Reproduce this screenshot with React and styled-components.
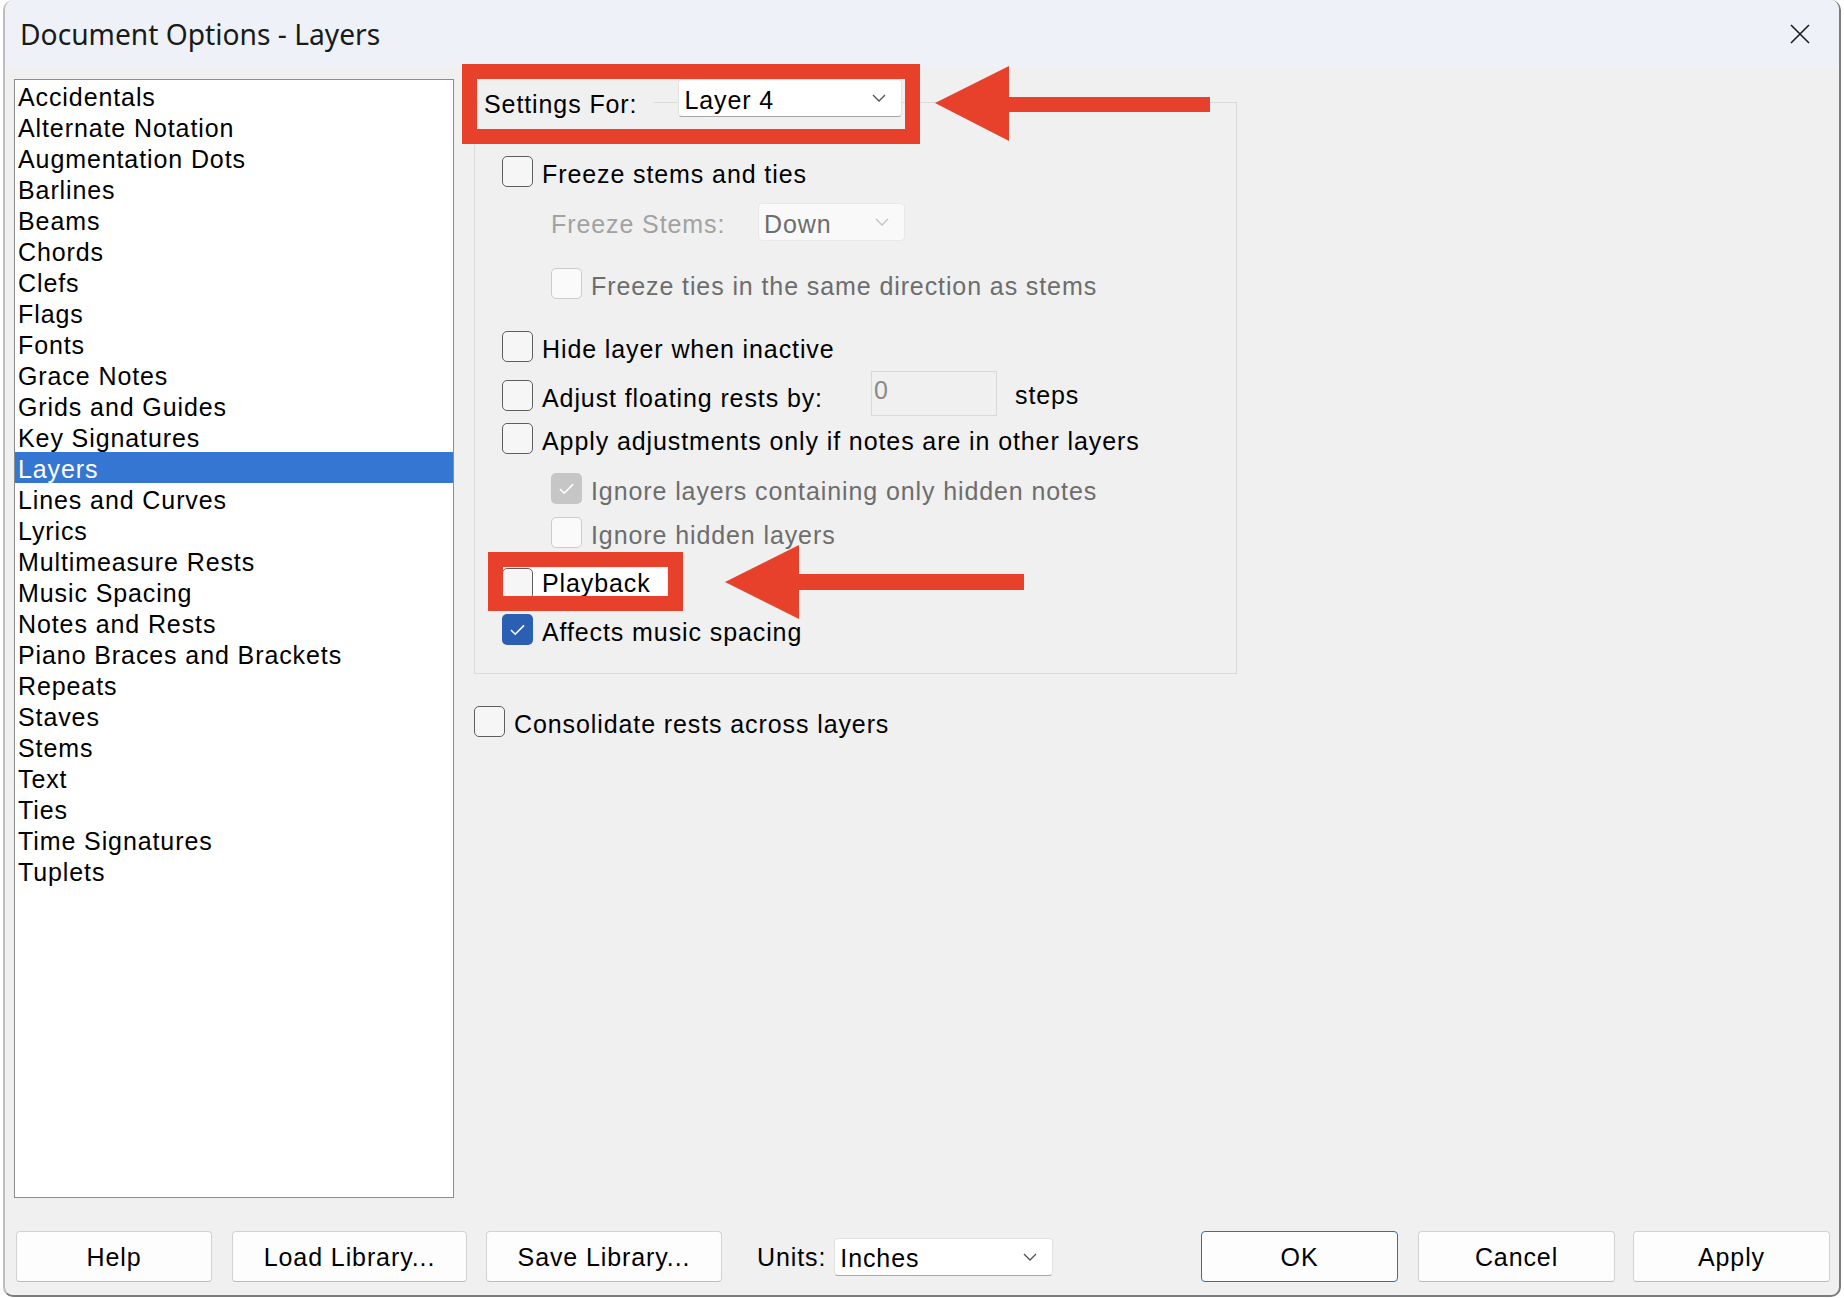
import styled, { createGlobalStyle } from 'styled-components'

const GlobalStyle = createGlobalStyle`
  html, body {
    margin: 0;
    padding: 0;
    background: #ffffff;
  }
  body {
    width: 1844px;
    height: 1298px;
    overflow: hidden;
  }
`

const UI_FONT = `'Liberation Sans', Arial, sans-serif`
const RED = '#e8412b'

const categories = [
  'Accidentals',
  'Alternate Notation',
  'Augmentation Dots',
  'Barlines',
  'Beams',
  'Chords',
  'Clefs',
  'Flags',
  'Fonts',
  'Grace Notes',
  'Grids and Guides',
  'Key Signatures',
  'Layers',
  'Lines and Curves',
  'Lyrics',
  'Multimeasure Rests',
  'Music Spacing',
  'Notes and Rests',
  'Piano Braces and Brackets',
  'Repeats',
  'Staves',
  'Stems',
  'Text',
  'Ties',
  'Time Signatures',
  'Tuplets',
]

const Chevron = ({ color = '#505050' }) => (
  <svg width="14" height="8" viewBox="0 0 14 8">
    <polyline points="1,1 7,7 13,1" fill="none" stroke={color} strokeWidth="1.3" />
  </svg>
)

const CheckMark = () => (
  <svg width="31" height="31" viewBox="0 0 31 31">
    <path d="M9 16 L13.2 20.2 L22 11.4" fill="none" stroke="#ffffff" strokeWidth="1.6" />
  </svg>
)

function CheckRow({ label, checked, disabled, indent, mt, highlight }) {
  return (
    <Row $mt={mt} $indent={indent} $highlight={highlight}>
      <Box $checked={checked} $disabled={disabled}>
        {checked && <CheckMark />}
      </Box>
      <RowText $disabled={disabled} $flat={highlight}>
        {label}
      </RowText>
    </Row>
  )
}

export default function App() {
  return (
    <Page>
      <GlobalStyle />
      <Window>
        <TitleBar>
          <Title>Document Options - Layers</Title>
          <svg width="20" height="20" viewBox="0 0 20 20">
            <path d="M1 1 L19 19 M19 1 L1 19" stroke="#1b1b1b" strokeWidth="1.6" />
          </svg>
        </TitleBar>

        <Body>
          <List>
            {categories.map((name) => (
              <Item key={name} $selected={name === 'Layers'}>
                {name}
              </Item>
            ))}
          </List>

          <Panel>
            <GroupBox>
              <Legend>
                <LegendLabel>Settings For:</LegendLabel>
                <Select $w={224} $ml={24}>
                  <span>Layer 4</span>
                  <Chevron />
                </Select>
              </Legend>

              <CheckRow mt={39} label="Freeze stems and ties" />

              <FieldRow $mt={16} $indent={49}>
                <FieldLabel $w={207} $faint>
                  Freeze Stems:
                </FieldLabel>
                <Select $w={147} $disabled>
                  <span>Down</span>
                  <Chevron color="#c2c2c2" />
                </Select>
              </FieldRow>

              <CheckRow
                mt={27}
                indent={49}
                disabled
                label="Freeze ties in the same direction as stems"
              />
              <CheckRow mt={32} label="Hide layer when inactive" />

              <Row $mt={18}>
                <Box />
                <FieldLabel $w={329}>Adjust floating rests by:</FieldLabel>
                <NumberBox>0</NumberBox>
                <Steps>steps</Steps>
              </Row>

              <CheckRow mt={12} label="Apply adjustments only if notes are in other layers" />
              <CheckRow
                mt={19}
                indent={49}
                disabled
                checked
                label="Ignore layers containing only hidden notes"
              />
              <CheckRow mt={13} indent={49} disabled label="Ignore hidden layers" />
              <CheckRow mt={20} highlight label="Playback" />
              <CheckRow mt={15} checked label="Affects music spacing" />
            </GroupBox>

            <CheckRow mt={32} label="Consolidate rests across layers" />
          </Panel>
        </Body>

        <Footer>
          <Button $w={196}>Help</Button>
          <Button $w={235} $ml={20}>
            Load Library...
          </Button>
          <Button $w={236} $ml={19}>
            Save Library...
          </Button>
          <UnitsLabel>Units:</UnitsLabel>
          <Select $w={219} $ml={8}>
            <span>Inches</span>
            <Chevron />
          </Select>
          <Button $w={197} $ml="auto" $primary>
            OK
          </Button>
          <Button $w={197} $ml={20}>
            Cancel
          </Button>
          <Button $w={197} $ml={18}>
            Apply
          </Button>
        </Footer>
      </Window>

      <Annotations viewBox="0 0 1844 1298">
        <rect x="469.5" y="71.5" width="443" height="65" fill="none" stroke={RED} strokeWidth="15" />
        <polygon
          points="935,103 1009,66 1009,97 1210,97 1210,112 1009,112 1009,141"
          fill={RED}
        />
        <rect x="495.5" y="559.5" width="180" height="44" fill="none" stroke={RED} strokeWidth="15" />
        <polygon
          points="725,582 799,545 799,574 1024,574 1024,590 799,590 799,619"
          fill={RED}
        />
      </Annotations>
    </Page>
  )
}

const Page = styled.div`
  position: relative;
  width: 1844px;
  height: 1298px;
  padding-left: 3px;
  box-sizing: border-box;
`

const Window = styled.div`
  width: 1838px;
  height: 1297px;
  box-sizing: border-box;
  border: 2px solid #a8a8a8;
  border-top: none;
  border-color: #c6c6c6 #7c7c7c #7c7c7c #bdbdbd;
  border-radius: 10px;
  background: #f0f0f0;
  overflow: hidden;
  display: flex;
  flex-direction: column;
  font-family: ${UI_FONT};
  font-size: 25px;
  letter-spacing: 0.9px;
  color: #000000;
`

const TitleBar = styled.div`
  height: 68px;
  flex: none;
  display: flex;
  align-items: center;
  justify-content: space-between;
  padding: 0 29px 0 15px;
  background: #eef2f8;
`

const Title = styled.div`
  font-family: 'Noto Sans', 'Open Sans', sans-serif;
  font-size: 28.2px;
  letter-spacing: 0;
  color: #1a1a1a;
`

const Body = styled.div`
  display: flex;
  gap: 20px;
  padding: 11px 0 0 9px;
`

const List = styled.ul`
  width: 440px;
  height: 1119px;
  box-sizing: border-box;
  margin: 0;
  padding: 0;
  list-style: none;
  background: #ffffff;
  border: 1px solid #8c8c8c;
`

const Item = styled.li`
  height: 31px;
  line-height: 35px;
  padding-left: 3px;
  white-space: nowrap;
  background: ${({ $selected }) => ($selected ? '#3476d2' : 'transparent')};
  color: ${({ $selected }) => ($selected ? '#ffffff' : '#000000')};
`

const Panel = styled.div`
  display: flex;
  flex-direction: column;
  padding-top: 23px;
`

const GroupBox = styled.div`
  width: 763px;
  height: 572px;
  box-sizing: border-box;
  border: 1px solid #dadada;
  padding-left: 27px;
  display: flex;
  flex-direction: column;
`

const Legend = styled.div`
  display: flex;
  height: 38px;
  margin: -24px 0 0 -24px;
`

const LegendLabel = styled.div`
  background: #f0f0f0;
  padding: 10px 17px 0 6px;
  line-height: 31px;
  height: 44px;
  box-sizing: border-box;
`

const Select = styled.div`
  width: ${({ $w }) => $w}px;
  height: 38px;
  margin-left: ${({ $ml }) => ($ml ? `${$ml}px` : '0')};
  flex: none;
  box-sizing: border-box;
  display: flex;
  align-items: center;
  justify-content: space-between;
  padding: 4px 15px 0 5px;
  line-height: 31px;
  border-radius: 4px;
  border: 1px solid ${({ $disabled }) => ($disabled ? '#e8e8e8' : '#e2e2e2')};
  border-bottom-color: ${({ $disabled }) => ($disabled ? '#e8e8e8' : '#a6a6a6')};
  background: ${({ $disabled }) => ($disabled ? '#f9f9f9' : '#ffffff')};
  color: ${({ $disabled }) => ($disabled ? '#6d6d6d' : '#000000')};

  svg {
    margin-top: -4px;
  }
`

const Row = styled.div`
  display: flex;
  align-items: center;
  height: 31px;
  line-height: 31px;
  margin-top: ${({ $mt }) => $mt || 0}px;
  margin-left: ${({ $indent }) => $indent || 0}px;
  align-self: flex-start;
  padding-right: ${({ $highlight }) => ($highlight ? '16px' : '0')};
  background: ${({ $highlight }) => ($highlight ? '#ffffff' : 'transparent')};
  white-space: nowrap;
`

const FieldRow = styled(Row)`
  height: 38px;
`

const Box = styled.div`
  width: 31px;
  height: 31px;
  flex: none;
  box-sizing: border-box;
  margin-right: 9px;
  border-radius: 5px;
  display: flex;
  border: ${({ $checked, $disabled }) =>
    $checked ? 'none' : `1.5px solid ${$disabled ? '#cbcbcb' : '#5f5f5f'}`};
  background: ${({ $checked, $disabled }) =>
    $checked ? ($disabled ? '#c6c6c6' : '#2b5fb4') : $disabled ? '#fafafa' : '#f6f6f6'};
`

const RowText = styled.span`
  padding-top: ${({ $flat }) => ($flat ? '0' : '5px')};
  color: ${({ $disabled }) => ($disabled ? '#6d6d6d' : '#000000')};
`

const FieldLabel = styled.span`
  width: ${({ $w }) => $w}px;
  flex: none;
  padding-top: 5px;
  color: ${({ $faint }) => ($faint ? '#a2a2a2' : '#000000')};
`

const NumberBox = styled.div`
  width: 126px;
  height: 45px;
  flex: none;
  box-sizing: border-box;
  margin-top: -4px;
  padding: 3px 0 0 2px;
  line-height: 31px;
  border: 1px solid #d9d9d9;
  background: #f0f0f0;
  color: #8a8a8a;
`

const Steps = styled.span`
  margin-left: 18px;
`

const Footer = styled.div`
  display: flex;
  align-items: center;
  height: 51px;
  margin-top: 33px;
  padding: 0 9px 0 11px;
  line-height: 31px;
`

const Button = styled.div`
  width: ${({ $w }) => $w}px;
  height: 51px;
  flex: none;
  box-sizing: border-box;
  margin-left: ${({ $ml }) => ($ml === 'auto' ? 'auto' : `${$ml || 0}px`)};
  display: flex;
  align-items: center;
  justify-content: center;
  padding-top: 2px;
  border-radius: 4px;
  background: #fdfdfd;
  border: 1px solid ${({ $primary }) => ($primary ? '#2f6cc8' : '#d2d2d2')};
  border-bottom-color: ${({ $primary }) => ($primary ? '#2f6cc8' : '#bcbcbc')};
`

const UnitsLabel = styled.span`
  margin-left: 35px;
  padding-top: 2px;
`

const Annotations = styled.svg`
  position: absolute;
  top: 0;
  left: 0;
  width: 1844px;
  height: 1298px;
  pointer-events: none;
`
